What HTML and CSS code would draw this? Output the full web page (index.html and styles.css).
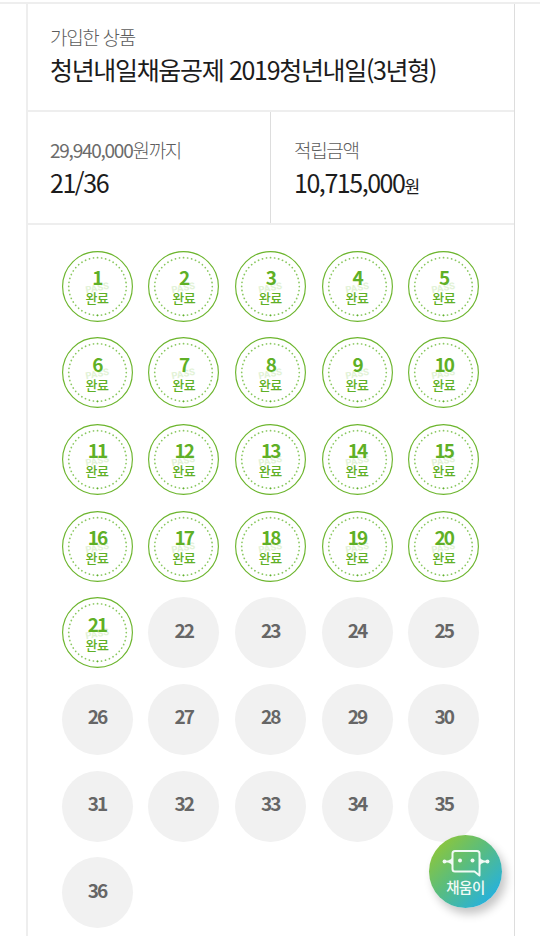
FILE: index.html
```
<!DOCTYPE html>
<html lang="ko">
<head>
<meta charset="utf-8">
<title>청년내일채움공제</title>
<link rel="stylesheet" href="styles.css">
</head>
<body>
<svg class="defs" aria-hidden="true">
  <symbol id="ring" viewBox="0 0 71 71">
    <circle cx="35.5" cy="35.5" r="34.9" fill="#fff" stroke="#6cb52d" stroke-width="1.15"/>
    <circle cx="35.5" cy="35.5" r="28.8" fill="none" stroke="#8ac860" stroke-width="1.7" stroke-linecap="round" stroke-dasharray="0.1 3.9" pathLength="176"/>
    <circle cx="35.5" cy="64.3" r="0.9" fill="#5faf2d"/>
    <text class="pass" x="35.5" y="40" text-anchor="middle" transform="rotate(-11 35.5 38)">PASS</text>
  </symbol>
</svg>
<main class="card">
  <section class="cell product">
    <p class="label">가입한 상품</p>
    <p class="value">청년내일채움공제 2019청년내일(3년형)</p>
  </section>
  <div class="summary">
    <section class="cell">
      <p class="label"><span class="num">29,940,000</span>원까지</p>
      <p class="value">21/36</p>
    </section>
    <section class="cell">
      <p class="label">적립금액</p>
      <p class="value">10,715,000<small>원</small></p>
    </section>
  </div>
  <ol class="stamps">
    <li class="done"><svg><use href="#ring"/></svg><b>1</b><span>완료</span></li>
    <li class="done"><svg><use href="#ring"/></svg><b>2</b><span>완료</span></li>
    <li class="done"><svg><use href="#ring"/></svg><b>3</b><span>완료</span></li>
    <li class="done"><svg><use href="#ring"/></svg><b>4</b><span>완료</span></li>
    <li class="done"><svg><use href="#ring"/></svg><b>5</b><span>완료</span></li>
    <li class="done"><svg><use href="#ring"/></svg><b>6</b><span>완료</span></li>
    <li class="done"><svg><use href="#ring"/></svg><b>7</b><span>완료</span></li>
    <li class="done"><svg><use href="#ring"/></svg><b>8</b><span>완료</span></li>
    <li class="done"><svg><use href="#ring"/></svg><b>9</b><span>완료</span></li>
    <li class="done"><svg><use href="#ring"/></svg><b>10</b><span>완료</span></li>
    <li class="done"><svg><use href="#ring"/></svg><b>11</b><span>완료</span></li>
    <li class="done"><svg><use href="#ring"/></svg><b>12</b><span>완료</span></li>
    <li class="done"><svg><use href="#ring"/></svg><b>13</b><span>완료</span></li>
    <li class="done"><svg><use href="#ring"/></svg><b>14</b><span>완료</span></li>
    <li class="done"><svg><use href="#ring"/></svg><b>15</b><span>완료</span></li>
    <li class="done"><svg><use href="#ring"/></svg><b>16</b><span>완료</span></li>
    <li class="done"><svg><use href="#ring"/></svg><b>17</b><span>완료</span></li>
    <li class="done"><svg><use href="#ring"/></svg><b>18</b><span>완료</span></li>
    <li class="done"><svg><use href="#ring"/></svg><b>19</b><span>완료</span></li>
    <li class="done"><svg><use href="#ring"/></svg><b>20</b><span>완료</span></li>
    <li class="done"><svg><use href="#ring"/></svg><b>21</b><span>완료</span></li>
    <li><b>22</b></li>
    <li><b>23</b></li>
    <li><b>24</b></li>
    <li><b>25</b></li>
    <li><b>26</b></li>
    <li><b>27</b></li>
    <li><b>28</b></li>
    <li><b>29</b></li>
    <li><b>30</b></li>
    <li><b>31</b></li>
    <li><b>32</b></li>
    <li><b>33</b></li>
    <li><b>34</b></li>
    <li><b>35</b></li>
    <li><b>36</b></li>
  </ol>
</main>
<a class="chatbot">
  <svg viewBox="0 0 48 28" width="48" height="28" fill="none" stroke="#f1faf5" stroke-width="2">
    <path d="M13 2h22q2.500 0 2.500 2.500v22l-5-4h-19.500q-2.500 0-2.500-2.500v-15.500q0-2.500 2.500-2.500z" stroke-linejoin="round"/>
    <path d="M1.500 12.500h8M38.500 12.500h8"/>
    <g fill="#f1faf5" stroke="none">
      <circle cx="2.500" cy="12.500" r="1.900"/>
      <circle cx="45.500" cy="12.500" r="1.900"/>
      <path d="M10.500 8.500q-1.500 2.200-4 2.800v2.400q2.500.6 4 2.800zM37.500 8.500q1.500 2.200 4 2.800v2.400q-2.500.6-4 2.800z"/>
      <circle cx="18" cy="11.500" r="2"/>
      <circle cx="30.500" cy="11.500" r="2"/>
    </g>
  </svg>
  <span>채움이</span>
</a>
</body>
</html>
```
FILE: styles.css
```
* { box-sizing: border-box; }
body {
  margin: 0;
  height: 936px;
  overflow: hidden;
  padding-top: 2px;
  background: #fff;
  color: #1c1c1c;
  font-family: "Noto Sans CJK KR", sans-serif;
}
p, ol { margin: 0; padding: 0; }
.defs { position: absolute; width: 0; height: 0; }
body::before {
  content: "";
  display: block;
  height: 2px;
  background: #eee;
}
.card {
  width: 489px;
  height: 936px;
  margin-left: 26px;
  border-left: 2px solid #eee;
  border-right: 1px solid #ddd;
}
.cell { padding: 19px 22px 0; }
.product { height: 108px; border-bottom: 2px solid #eee; }
.label {
  font-size: 19px;
  line-height: 28px;
  font-weight: 300;
  letter-spacing: -1.300px;
  color: #5c5c5c;
}
.label .num { font-weight: 400; letter-spacing: -1.250px; color: #6b6b6b; }
.value {
  font-size: 25px;
  line-height: 37px;
  letter-spacing: -1.330px;
  white-space: nowrap;
}
.summary .value { letter-spacing: -1.450px; }
.value small { font-size: 17px; letter-spacing: 0; }
.summary {
  display: grid;
  grid-template-columns: 242px 1fr;
  height: 113px;
  border-bottom: 2px solid #eee;
}
.summary .cell { padding-top: 24px; }
.summary .cell + .cell { border-left: 1px solid #ddd; padding-left: 23px; }
.stamps {
  list-style: none;
  display: grid;
  grid-template-columns: repeat(5, 71px);
  grid-auto-rows: 71px;
  gap: 15.700px;
  padding: 25.500px 0 0 33.500px;
}
.stamps li {
  position: relative;
  display: flex;
  flex-direction: column;
  align-items: center;
  justify-content: center;
  border-radius: 50%;
  background: #f1f1f1;
  color: #666;
  padding-bottom: 7px;
}
.stamps li.done { background: none; color: #5fb026; padding: 0; }
.stamps svg { position: absolute; inset: 0; width: 71px; height: 71px; }
.stamps b {
  position: relative;
  font-size: 19px;
  line-height: 21px;
  font-weight: 700;
  letter-spacing: -1.900px;
}
.stamps span { position: relative; top: 1px; font-size: 13px; line-height: 19px; font-weight: 500; letter-spacing: -.4px; }
.pass { font: 700 9.500px Roboto, sans-serif; letter-spacing: 0; fill: #e2f2d6; }
.chatbot {
  position: absolute;
  left: 429px;
  top: 835px;
  width: 73px;
  height: 73px;
  padding-top: 14px;
  border-radius: 50%;
  background: linear-gradient(135deg, #8cc63c 12%, #5bbd7c 45%, #25b1df 88%);
  box-shadow: 4px 6px 10px rgba(0, 0, 0, .23);
  display: flex;
  flex-direction: column;
  align-items: center;
  color: #f1faf5;
}
.chatbot span { font-size: 14.500px; line-height: 20px; font-weight: 500; letter-spacing: -0.030em; }
```
